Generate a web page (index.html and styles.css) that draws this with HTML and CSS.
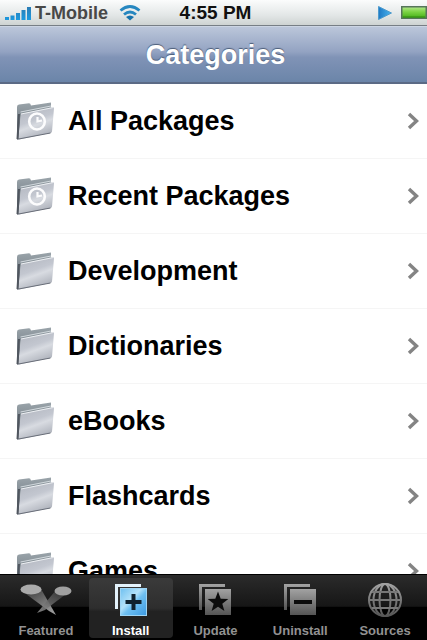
FILE: index.html
```html
<!DOCTYPE html>
<html lang="en">
<head>
    <meta charset="UTF-8">
    <meta name="viewport" content="width=device-width, initial-scale=1.0">
    <title>Categories</title>
    <link rel="stylesheet" href="styles.css">
</head>
<body>
    <!-- Shared icons -->
    <svg class="defs" width="0" height="0" aria-hidden="true">
        <defs>
            <linearGradient id="front" x1="0" y1="0" x2="0.4" y2="1">
                <stop offset="0" stop-color="#b0b4bd"/>
                <stop offset="0.5" stop-color="#c3c7d0"/>
                <stop offset="0.65" stop-color="#d8dbe1"/>
                <stop offset="1" stop-color="#b0b4bd"/>
            </linearGradient>
            <linearGradient id="back" x1="0" y1="0" x2="0" y2="1">
                <stop offset="0" stop-color="#9aa4aa"/>
                <stop offset="0.5" stop-color="#7d868e"/>
                <stop offset="1" stop-color="#4c525c"/>
            </linearGradient>
            <linearGradient id="gray" x1="0" y1="0" x2="0" y2="1">
                <stop offset="0" stop-color="#a2a2a2"/>
                <stop offset="1" stop-color="#555"/>
            </linearGradient>
            <linearGradient id="blue" x1="0" y1="0" x2="1" y2="1">
                <stop offset="0" stop-color="#6fc0f0"/>
                <stop offset="0.4" stop-color="#b4e2fa"/>
                <stop offset="0.55" stop-color="#6fc0f2"/>
                <stop offset="1" stop-color="#3c9ae2"/>
            </linearGradient>
            <linearGradient id="beam-left" x1="0" y1="0" x2="0.7" y2="1">
                <stop offset="0" stop-color="#333"/>
                <stop offset="1" stop-color="#999"/>
            </linearGradient>
            <linearGradient id="beam-right" x1="1" y1="0" x2="0.3" y2="1">
                <stop offset="0" stop-color="#2c2c2c"/>
                <stop offset="1" stop-color="#888"/>
            </linearGradient>
            <linearGradient id="signal" x1="0" y1="0" x2="0" y2="1">
                <stop offset="0" stop-color="#2b7cb4"/>
                <stop offset="1" stop-color="#1c9ae0"/>
            </linearGradient>
            <linearGradient id="play" x1="0" y1="0" x2="1" y2="0">
                <stop offset="0" stop-color="#1f79c4"/>
                <stop offset="1" stop-color="#49b5f0"/>
            </linearGradient>
            <linearGradient id="charge" x1="0" y1="0" x2="0" y2="1">
                <stop offset="0" stop-color="#b5e88d"/>
                <stop offset="0.45" stop-color="#7bd343"/>
                <stop offset="1" stop-color="#43ad16"/>
            </linearGradient>
        </defs>
        <symbol id="folder" viewBox="0 0 40 40">
            <path d="M2 37.500 L2 6 Q2 4 4 3.600 L14 2.300 Q15.500 2.300 16 4.500 L36 1.500 V8 L6 14 L4 38 Z" fill="url(#back)"/>
            <path d="M5.500 11 L36 5" stroke="#d3dade"/>
            <path d="M6 13 L38 6 Q39 6 39 7.500 L37 30.500 Q36.800 31.800 35.500 32 L4 38.500 Q3 38.500 3.200 37 Z" fill="url(#front)"/>
            <path d="M6 13 L38.500 6.500" stroke="#eceff2" fill="none"/>
            <path d="M2 38.300 L35.500 32" stroke="#686d78" fill="none"/>
            <path d="M4 13 L2.500 38" stroke="#50565f" stroke-width="2" fill="none"/>
        </symbol>
        <symbol id="folder-clock" viewBox="0 0 40 40">
            <use href="#folder"/>
            <g fill="none" stroke="#fcfcfd">
                <ellipse cx="22" cy="20.500" rx="7.800" ry="8" stroke-width="2.600"/>
                <path d="M22.500 16 V20.500 L27 19.500" stroke-width="2.200"/>
            </g>
        </symbol>
        <symbol id="chevron" viewBox="0 0 12 18">
            <path d="M2 2 L9.500 9 L2 16" fill="none" stroke="#848484" stroke-width="3.400"/>
        </symbol>
    </svg>

    <div class="status-bar">
        <div class="status-left">
            <svg class="bars" viewBox="0 0 26 14" aria-hidden="true">
                <path d="M0 11h4v3h-4z M5.500 9.500h4v4.500h-4z M11 7h4v7h-4z M16.500 4h4v10h-4z M22 1h4v13h-4z" fill="url(#signal)"/>
            </svg>
            <span class="carrier">T-Mobile</span>
            <svg class="wifi" viewBox="0 0 22 16" aria-hidden="true">
                <g fill="none" stroke="#2687c0" stroke-width="2.800">
                    <path d="M1.500 5.500 Q11 -2.500 20.500 5.500"/>
                    <path d="M5 9.500 Q11 4.500 17 9.500"/>
                </g>
                <path d="M11 15.500 L7 12 Q11 9 15 12 Z" fill="#1672ac"/>
            </svg>
        </div>
        <span class="time">4:55 PM</span>
        <div class="status-right">
            <svg class="play" viewBox="0 0 14 14" aria-hidden="true">
                <path d="M0.500 0.500 L13.500 7 L0.500 13.500 Z" fill="url(#play)" stroke="#4d9bcd"/>
            </svg>
            <svg class="battery" viewBox="0 0 26 13" aria-hidden="true">
                <rect x="0.750" y="0.750" width="24.500" height="11.500" fill="url(#charge)" stroke="#56755a" stroke-width="1.500"/>
                <path d="M2 11h22" stroke="#2f8b0d" fill="none"/>
            </svg>
        </div>
    </div>

    <header class="nav-bar">
        <h1>Categories</h1>
    </header>

    <main class="list">
        <a class="row" href="#all">
            <svg class="folder" aria-hidden="true"><use href="#folder-clock"/></svg>
            <span class="name">All Packages</span>
            <svg class="chevron" aria-hidden="true"><use href="#chevron"/></svg>
        </a>
        <a class="row" href="#recent">
            <svg class="folder" aria-hidden="true"><use href="#folder-clock"/></svg>
            <span class="name">Recent Packages</span>
            <svg class="chevron" aria-hidden="true"><use href="#chevron"/></svg>
        </a>
        <a class="row" href="#development">
            <svg class="folder" aria-hidden="true"><use href="#folder"/></svg>
            <span class="name">Development</span>
            <svg class="chevron" aria-hidden="true"><use href="#chevron"/></svg>
        </a>
        <a class="row" href="#dictionaries">
            <svg class="folder" aria-hidden="true"><use href="#folder"/></svg>
            <span class="name">Dictionaries</span>
            <svg class="chevron" aria-hidden="true"><use href="#chevron"/></svg>
        </a>
        <a class="row" href="#ebooks">
            <svg class="folder" aria-hidden="true"><use href="#folder"/></svg>
            <span class="name">eBooks</span>
            <svg class="chevron" aria-hidden="true"><use href="#chevron"/></svg>
        </a>
        <a class="row" href="#flashcards">
            <svg class="folder" aria-hidden="true"><use href="#folder"/></svg>
            <span class="name">Flashcards</span>
            <svg class="chevron" aria-hidden="true"><use href="#chevron"/></svg>
        </a>
        <a class="row" href="#games">
            <svg class="folder" aria-hidden="true"><use href="#folder"/></svg>
            <span class="name">Games</span>
            <svg class="chevron" aria-hidden="true"><use href="#chevron"/></svg>
        </a>
    </main>

    <nav class="tab-bar">
        <button class="tab" type="button">
            <svg class="tab-icon wide" viewBox="0 0 52 34" aria-hidden="true">
                <path d="M2 8 L21 6 L36 32 L29 28 Z" fill="url(#beam-left)"/>
                <path d="M50 8 L36 7 L17 30 L25 27 Z" fill="url(#beam-right)" opacity="0.850"/>
                <ellipse cx="11" cy="6.500" rx="10.500" ry="5" fill="#aaa"/>
                <ellipse cx="43" cy="8" rx="8.500" ry="4.500" fill="#a0a0a0"/>
            </svg>
            <span>Featured</span>
        </button>
        <button class="tab active" type="button" aria-current="page">
            <svg class="tab-icon" viewBox="0 0 34 34" aria-hidden="true">
                <path d="M1 26 V1 H27 V4 H4 V26 Z" fill="#e4f3fc"/>
                <rect x="6.500" y="5.500" width="26" height="27" fill="url(#blue)" stroke="#9ed5f5"/>
                <path d="M19.500 11 V27 M11.500 19 H27.500" stroke="#10222f" stroke-width="4" fill="none"/>
            </svg>
            <span>Install</span>
        </button>
        <button class="tab" type="button">
            <svg class="tab-icon" viewBox="0 0 34 34" aria-hidden="true">
                <path d="M1 27 V1 H27 V4 H4 V27 Z" fill="url(#gray)"/>
                <rect x="7" y="6" width="26" height="26" fill="url(#gray)"/>
                <path d="M20 8.500 L22.700 15.700 L30.300 16 L24.300 20.700 L26.400 28 L20 23.800 L13.600 28 L15.700 20.700 L9.700 16 L17.300 15.700 Z" fill="#0c0c0c"/>
            </svg>
            <span>Update</span>
        </button>
        <button class="tab" type="button">
            <svg class="tab-icon" viewBox="0 0 34 34" aria-hidden="true">
                <path d="M1 27 V1 H27 V4 H4 V27 Z" fill="url(#gray)"/>
                <rect x="7" y="6" width="26" height="26" fill="url(#gray)"/>
                <path d="M11 17 H29 V21 H11 Z" fill="#0c0c0c"/>
            </svg>
            <span>Uninstall</span>
        </button>
        <button class="tab" type="button">
            <svg class="tab-icon" viewBox="0 0 34 34" aria-hidden="true">
                <g fill="none" stroke="url(#gray)" stroke-width="2">
                    <circle cx="17" cy="17" r="16"/>
                    <ellipse cx="17" cy="17" rx="11.500" ry="16"/>
                    <ellipse cx="17" cy="17" rx="5.500" ry="16"/>
                </g>
                <path d="M1.500 17 H32.500 M4 9 H30 M4 25 H30" stroke="#777" stroke-width="2" fill="none"/>
            </svg>
            <span>Sources</span>
        </button>
    </nav>
</body>
</html>
```
FILE: styles.css
```css
* {
    box-sizing: border-box;
}
body {
    margin: 0;
    height: 100vh;
    display: flex;
    flex-direction: column;
    overflow: hidden;
    background: #fff;
    font-family: "Liberation Sans", Arial, Helvetica, sans-serif;
    font-weight: bold;
}
svg {
    display: block;
    flex: none;
}
.defs {
    position: absolute;
}

/* Status bar */
.status-bar {
    flex: none;
    height: 26px;
    display: grid;
    grid-template-columns: 1fr auto 1fr;
    align-items: center;
    background: linear-gradient(#fbfcfc, #e3e7e7 60%, #ced3d2);
    border-bottom: 1px solid #777e85;
    font-size: 18px;
    line-height: 24px;
}
.status-left,
.status-right {
    display: flex;
    align-items: center;
}
.status-left {
    padding-left: 5px;
}
.status-right {
    justify-content: flex-end;
    gap: 9px;
}
.bars {
    width: 26px;
    height: 14px;
    margin-right: 4px;
}
.carrier {
    color: #484848;
}
.wifi {
    width: 22px;
    height: 16px;
    margin-left: 11px;
}
.time {
    padding-left: 4px;
    color: #111;
    font-size: 19px;
}
.play {
    width: 14px;
    height: 14px;
}
.battery {
    width: 26px;
    height: 13px;
}

/* Title bar */
.nav-bar {
    flex: none;
    height: 58px;
    display: flex;
    align-items: center;
    justify-content: center;
    padding: 2px 0 0 4px;
    background: linear-gradient(#bbc6da, #93a3c2 45%, #8093b6 55%, #6b85a9);
    border-top: 1px solid #ccd5e3;
    border-bottom: 2px solid #5b6a85;
}
.nav-bar h1 {
    margin: 0;
    color: #fff;
    font-size: 27px;
    text-shadow: 0 -1px 1px #4b5c78;
}

/* Category list */
.list {
    flex: 1;
    min-height: 0;
    overflow: hidden;
}
.row {
    height: 75px;
    display: flex;
    align-items: center;
    gap: 13px;
    padding: 0 8px 0 15px;
    border-bottom: 1px solid #f5f5f5;
    color: #000;
    font-size: 27px;
    text-decoration: none;
}
.folder {
    width: 40px;
    height: 40px;
}
.name {
    flex: 1;
}
.chevron {
    width: 12px;
    height: 18px;
}

/* Tab bar */
.tab-bar {
    flex: none;
    height: 66px;
    display: grid;
    grid-template-columns: repeat(5, 1fr);
    column-gap: 1px;
    padding: 3px 0 2px 4px;
    background: linear-gradient(#2b2b2b, #161616 48%, #000 50%);
    border-top: 1px solid #000;
}
.tab {
    display: flex;
    flex-direction: column;
    align-items: center;
    justify-content: space-between;
    margin: 0;
    padding: 5px 0 0;
    border: 0;
    border-radius: 4px;
    background: none;
    color: #929292;
    font: bold 13px/14px "Liberation Sans", Arial, sans-serif;
}
.tab.active {
    background: linear-gradient(#3a3a3a, #2e2e2e 50%, #222 56%);
    color: #fff;
}
.tab-icon {
    width: 34px;
    height: 34px;
}
.tab-icon.wide {
    width: 52px;
}
```
